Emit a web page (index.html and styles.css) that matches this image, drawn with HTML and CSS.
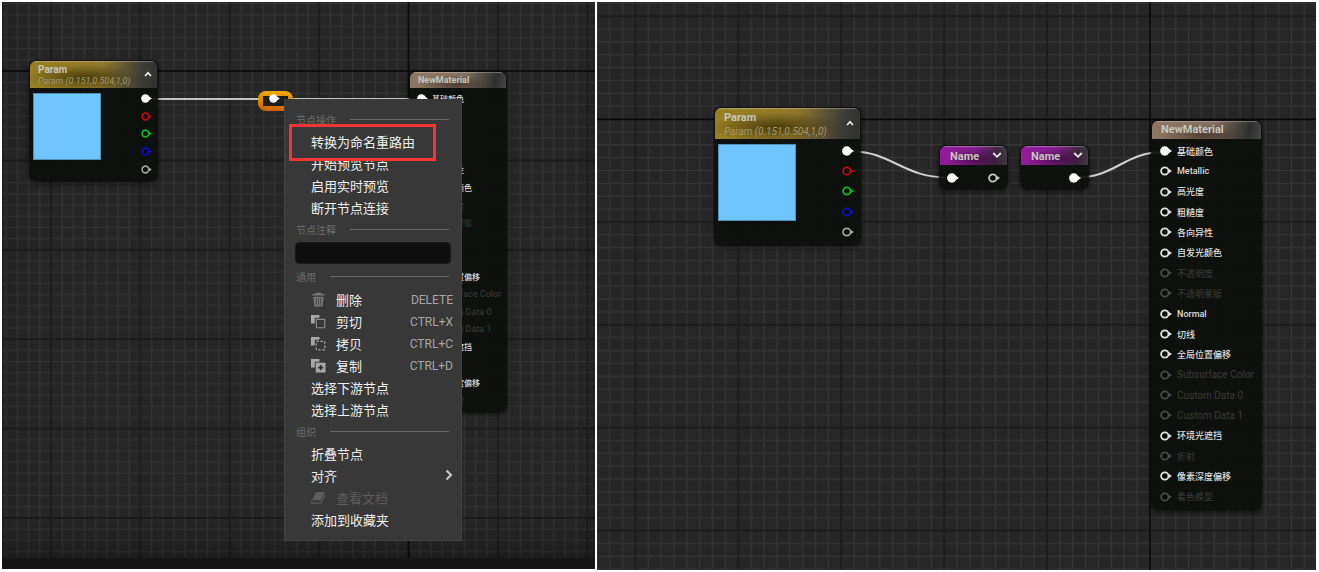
FILE: index.html
```html
<!DOCTYPE html>
<html lang="zh-CN">
<head>
<meta charset="utf-8">
<title>材质编辑器</title>
<link rel="stylesheet" href="styles.css">
</head>
<body>
<svg class="defs" aria-hidden="true">
  <symbol id="pin" viewBox="0 0 12 10"><circle cx="4.8" cy="5" r="3.7" fill="#0b0d0b" stroke="currentColor" stroke-width="1.8"/><path d="M8.6 2.8 12 5 8.6 7.2Z" fill="currentColor"/></symbol>
  <symbol id="pin-on" viewBox="0 0 12 10"><circle cx="4.8" cy="5" r="4.7" fill="currentColor"/><path d="M8.6 2.8 12 5 8.6 7.2Z" fill="currentColor"/></symbol>
  <symbol id="up" viewBox="0 0 8 8"><path d="M1 6 4 2.8 7 6" fill="none" stroke="currentColor" stroke-width="1.7"/></symbol>
  <symbol id="down" viewBox="0 0 10 8"><path d="M1.2 2 5 5.8 8.8 2" fill="none" stroke="currentColor" stroke-width="1.8"/></symbol>
</svg>
<main class="shots">
  <section class="canvas canvas-small">
    <svg class="layer" aria-hidden="true">
      <defs>
        <pattern id="grid-a" width="80" height="80" patternUnits="userSpaceOnUse" patternTransform="translate(49 69) scale(1.1175)">
          <path d="M10 0V80M20 0V80M30 0V80M40 0V80M50 0V80M60 0V80M70 0V80M0 10H80M0 20H80M0 30H80M0 40H80M0 50H80M0 60H80M0 70H80" stroke="#343434" stroke-width="1.1"/>
          <path d="M0 0V80M80 0V80M0 0H80M0 80H80" stroke="#181818" stroke-width="1.2"/>
        </pattern>
      </defs>
      <rect width="100%" height="100%" fill="url(#grid-a)"/>
      <path d="M0 69H2000M406.500 0V2000" stroke="#0b0b0b" stroke-width="1.500"/>
    </svg>
    <div class="vignette"></div>
    <svg class="layer" aria-hidden="true">
      <path d="M150 97 L420 97" stroke="#c4c4c4" stroke-width="2" fill="none"/>
    </svg>

    <article class="node param param-a">
      <header class="gold"><h2>Param</h2><p>Param (0.151,0.504,1,0)</p><svg class="caret"><use href="#up"/></svg></header>
      <div class="body">
        <div class="swatch"></div>
        <ul class="outs">
          <li class="white"><svg class="pin"><use href="#pin-on"/></svg></li>
          <li class="red"><svg class="pin"><use href="#pin"/></svg></li>
          <li class="green"><svg class="pin"><use href="#pin"/></svg></li>
          <li class="blue"><svg class="pin"><use href="#pin"/></svg></li>
          <li class="gray"><svg class="pin"><use href="#pin"/></svg></li>
        </ul>
      </div>
    </article>

    <div class="reroute"><svg class="pin"><use href="#pin-on"/></svg></div>

    <article class="node material material-a">
      <header class="tan"><h2>NewMaterial</h2></header>
      <ul class="ins">
        <li><svg class="pin"><use href="#pin-on"/></svg>基础颜色</li>
        <li><svg class="pin"><use href="#pin"/></svg>Metallic</li>
        <li><svg class="pin"><use href="#pin"/></svg>高光度</li>
        <li><svg class="pin"><use href="#pin"/></svg>粗糙度</li>
        <li><svg class="pin"><use href="#pin"/></svg>各向异性</li>
        <li><svg class="pin"><use href="#pin"/></svg>自发光颜色</li>
        <li class="off"><svg class="pin"><use href="#pin"/></svg>不透明度</li>
        <li class="off"><svg class="pin"><use href="#pin"/></svg>不透明蒙版</li>
        <li><svg class="pin"><use href="#pin"/></svg>Normal</li>
        <li><svg class="pin"><use href="#pin"/></svg>切线</li>
        <li><svg class="pin"><use href="#pin"/></svg>全局位置偏移</li>
        <li class="off latin"><svg class="pin"><use href="#pin"/></svg>Subsurface Color</li>
        <li class="off latin"><svg class="pin"><use href="#pin"/></svg>Custom Data 0</li>
        <li class="off latin"><svg class="pin"><use href="#pin"/></svg>Custom Data 1</li>
        <li><svg class="pin"><use href="#pin"/></svg>环境光遮挡</li>
        <li class="off"><svg class="pin"><use href="#pin"/></svg>折射</li>
        <li><svg class="pin"><use href="#pin"/></svg>像素深度偏移</li>
        <li class="off"><svg class="pin"><use href="#pin"/></svg>着色模型</li>
      </ul>
    </article>

    <nav class="menu">
      <h3 class="wide">节点操作</h3>
      <button class="marked" type="button">转换为命名重路由</button>
      <button type="button">开始预览节点</button>
      <button type="button">启用实时预览</button>
      <button type="button">断开节点连接</button>
      <h3 class="wide"><label for="comment">节点注释</label></h3>
      <input id="comment" type="text">
      <h3 class="tall">通用</h3>
      <button type="button"><svg class="icon" viewBox="0 0 16 16"><path d="M1.500 3h13M5.500 2.500v-1h5v1" stroke="currentColor" stroke-width="1.500" fill="none"/><path d="M2.500 5h11l-1 10.500h-9z" fill="currentColor"/><path d="M5.700 6.500v7.500M8 6.500v7.500M10.300 6.500v7.500" stroke="#444" stroke-width="1"/></svg>删除<kbd>DELETE</kbd></button>
      <button type="button"><svg class="icon bright" viewBox="0 0 16 16"><path d="M0 1h9v3H4v6H0z" fill="currentColor"/><path d="M5.700 5.700h9v9h-9z" fill="none" stroke="#8c8c8c" stroke-width="1.200"/></svg>剪切<kbd>CTRL+X</kbd></button>
      <button type="button"><svg class="icon bright" viewBox="0 0 16 16"><path d="M0 1h9v3H4v6H0z" fill="currentColor"/><path d="M5.700 5.700h9v9h-9z" fill="none" stroke="currentColor" stroke-width="1.300" stroke-dasharray="2.500 2"/></svg>拷贝<kbd>CTRL+C</kbd></button>
      <button type="button"><svg class="icon bright" viewBox="0 0 16 16"><path d="M0 1h9v3H4v6H0z" fill="currentColor"/><path d="M5 5h10.500v10.500H5z" fill="currentColor"/><path d="M10.300 7.500v5.600M7.500 10.300h5.600" stroke="#2b2b2b" stroke-width="1.700"/></svg>复制<kbd>CTRL+D</kbd></button>
      <button type="button">选择下游节点</button>
      <button type="button">选择上游节点</button>
      <h3>组织</h3>
      <button type="button">折叠节点</button>
      <button type="button">对齐<svg class="more" viewBox="0 0 8 12"><path d="M1.500 1.500 6 6 1.500 10.500" fill="none" stroke="currentColor" stroke-width="2"/></svg></button>
      <button type="button" disabled><svg class="icon" viewBox="0 0 16 16"><path d="M5.500 2h9.500L10.500 11H1z" fill="currentColor"/><path d="M1 11.500 .8 14h9.700L15 5.200" fill="none" stroke="currentColor" stroke-width="1.200"/></svg>查看文档</button>
      <button type="button">添加到收藏夹</button>
    </nav>
    <footer class="strip"></footer>
  </section>

  <section class="canvas canvas-large">
    <svg class="layer" aria-hidden="true">
      <defs>
        <pattern id="grid-b" width="80" height="80" patternUnits="userSpaceOnUse" patternTransform="translate(38.500 117) scale(1.286)">
          <path d="M10 0V80M20 0V80M30 0V80M40 0V80M50 0V80M60 0V80M70 0V80M0 10H80M0 20H80M0 30H80M0 40H80M0 50H80M0 60H80M0 70H80" stroke="#343434" stroke-width="1.1"/>
          <path d="M0 0V80M80 0V80M0 0H80M0 80H80" stroke="#191919" stroke-width="1.1"/>
        </pattern>
      </defs>
      <rect width="100%" height="100%" fill="url(#grid-b)"/>
      <path d="M0 117.500H2000M553 0V2000" stroke="#080808" stroke-width="1.300"/>
      <path d="M256 149.500C293 149.500 307 175.500 350 175.500M480 175.500C518 175.500 528 150 566 150" stroke="#d0d0d0" stroke-width="2" fill="none"/>
    </svg>

    <article class="node param param-b">
      <header class="gold"><h2>Param</h2><p>Param (0.151,0.504,1,0)</p><svg class="caret"><use href="#up"/></svg></header>
      <div class="body">
        <div class="swatch"></div>
        <ul class="outs">
          <li class="white"><svg class="pin"><use href="#pin-on"/></svg></li>
          <li class="red"><svg class="pin"><use href="#pin"/></svg></li>
          <li class="green"><svg class="pin"><use href="#pin"/></svg></li>
          <li class="blue"><svg class="pin"><use href="#pin"/></svg></li>
          <li class="gray"><svg class="pin"><use href="#pin"/></svg></li>
        </ul>
      </div>
    </article>

    <article class="node name name-in">
      <header class="purple"><h2>Name</h2><svg class="caret"><use href="#down"/></svg></header>
      <div class="ports"><svg class="pin"><use href="#pin-on"/></svg><svg class="pin hollow"><use href="#pin"/></svg></div>
    </article>
    <article class="node name name-out">
      <header class="purple"><h2>Name</h2><svg class="caret"><use href="#down"/></svg></header>
      <div class="ports end"><svg class="pin"><use href="#pin-on"/></svg></div>
    </article>

    <article class="node material material-b">
      <header class="tan"><h2>NewMaterial</h2></header>
      <ul class="ins">
        <li><svg class="pin"><use href="#pin-on"/></svg>基础颜色</li>
        <li><svg class="pin"><use href="#pin"/></svg>Metallic</li>
        <li><svg class="pin"><use href="#pin"/></svg>高光度</li>
        <li><svg class="pin"><use href="#pin"/></svg>粗糙度</li>
        <li><svg class="pin"><use href="#pin"/></svg>各向异性</li>
        <li><svg class="pin"><use href="#pin"/></svg>自发光颜色</li>
        <li class="off"><svg class="pin"><use href="#pin"/></svg>不透明度</li>
        <li class="off"><svg class="pin"><use href="#pin"/></svg>不透明蒙版</li>
        <li><svg class="pin"><use href="#pin"/></svg>Normal</li>
        <li><svg class="pin"><use href="#pin"/></svg>切线</li>
        <li><svg class="pin"><use href="#pin"/></svg>全局位置偏移</li>
        <li class="off latin"><svg class="pin"><use href="#pin"/></svg>Subsurface Color</li>
        <li class="off latin"><svg class="pin"><use href="#pin"/></svg>Custom Data 0</li>
        <li class="off latin"><svg class="pin"><use href="#pin"/></svg>Custom Data 1</li>
        <li><svg class="pin"><use href="#pin"/></svg>环境光遮挡</li>
        <li class="off"><svg class="pin"><use href="#pin"/></svg>折射</li>
        <li><svg class="pin"><use href="#pin"/></svg>像素深度偏移</li>
        <li class="off"><svg class="pin"><use href="#pin"/></svg>着色模型</li>
      </ul>
    </article>
  </section>
</main>
</body>
</html>
```

FILE: styles.css
```css
* { box-sizing: border-box; }
body { margin: 0; background: #fff; font-family: Roboto, "Noto Sans CJK SC", sans-serif; }
h2, h3, p, ul { margin: 0; padding: 0; list-style: none; }
.defs { position: absolute; width: 0; height: 0; }

.shots { display: flex; gap: 2px; height: 100vh; padding: 2px 3px 2px 2px; }
.canvas { position: relative; overflow: hidden; background: #262626; }
.canvas-small { flex: 593; margin-bottom: 1px; }
.canvas-large { flex: 719; }
.layer { position: absolute; inset: 0; width: 100%; height: 100%; }
.vignette { position: absolute; inset: 0; box-shadow: inset 0 -30px 40px -16px rgba(0, 0, 0, .45); }
.strip { position: absolute; left: 0; right: 0; bottom: 0; height: 11px; background: #161616; }

/* Nodes */
.node { position: absolute; display: flex; flex-direction: column; overflow: hidden; border-radius: 6px; background: rgba(12, 15, 12, .93); box-shadow: 0 0 2px 1px #0c0c0c, 0 3px 6px rgba(0, 0, 0, .6); }
.node header { position: relative; color: #c6c6be; box-shadow: inset 0 1px 1px rgba(255, 255, 255, .3); }
.node h2 { font-weight: 700; }
.node p { font-style: italic; color: #a5986a; white-space: nowrap; }
.gold { background: radial-gradient(ellipse at 42% 62%, rgba(50, 38, 0, .75), rgba(50, 38, 0, 0) 55%), linear-gradient(100deg, #98801f 0%, #8f782c 55%, #3a3a36 88%, #303230 100%); }
.tan { background: radial-gradient(ellipse at 48% 80%, rgba(66, 52, 42, .8), rgba(60, 50, 40, 0) 55%), linear-gradient(100deg, #8e7660 0%, #83705f 55%, #2e302e 88%, #444 100%); }
.purple { background: radial-gradient(ellipse at 55% 70%, rgba(60, 8, 66, .8), rgba(60, 8, 66, 0) 60%), linear-gradient(100deg, #931a9c 0%, #86208e 50%, #3c2a3e 82%, #3c3c3c 100%); }
.caret { position: absolute; color: #e6e6e6; width: 8px; height: 8px; }
.pin { flex: none; width: 12px; height: 10px; color: #fff; }
.canvas-small .pin { width: 11px; height: 9px; }

.body { display: flex; flex: 1; justify-content: space-between; }
.swatch { background: #6ec5ff; border: 1px solid #4f8fba; }
.outs, .ins { display: grid; grid-auto-rows: 1fr; }
.outs li, .ins li { display: flex; align-items: center; }
.red .pin { color: #c60808; }
.green .pin { color: #08bd14; }
.blue .pin { color: #0c0cc4; }
.gray .pin { color: #a0a0a0; }

.param-a { left: 28px; top: 59px; width: 127px; height: 119px; }
.param-a header { height: 27px; padding: 3px 8px; }
.param-a h2 { font-size: 10px; line-height: 11px; }
.param-a p { font-size: 9px; line-height: 12px; }
.param-a .caret { right: 5px; top: 9px; }
.param-a .body { padding: 2px 5px 2px 3px; }
.param-a .swatch { width: 68px; height: 67px; margin-top: 3px; }

.param-b { left: 118px; top: 106px; width: 145px; height: 136px; }
.param-b header { height: 31px; padding: 3px 9px; }
.param-b h2 { font-size: 11px; line-height: 14px; }
.param-b p { font-size: 10px; line-height: 13px; }
.param-b .caret { right: 6px; top: 11px; }
.param-b .body { padding: 2px 6px 2px 3px; }
.param-b .swatch { width: 78px; height: 77px; margin-top: 3px; }

.reroute { position: absolute; left: 256px; top: 89px; width: 35px; height: 20px; padding: 3px 11px; border-radius: 8px; background: linear-gradient(#1d1d1d, #1d1d1d) 5px 5px / 25px 10px no-repeat, linear-gradient(#f0aa00, #cc6200); }
.reroute .pin { display: block; }

.name { top: 144px; width: 67px; height: 42px; }
.name-in { left: 343px; }
.name-out { left: 424px; }
.name header { height: 19px; padding: 3px 10px; }
.name h2 { font-size: 11px; line-height: 15px; }
.name .caret { right: 5px; top: 5px; width: 10px; }
.ports { display: flex; flex: 1; align-items: center; justify-content: space-between; padding: 2px 7px 0; }
.ports.end { justify-content: flex-end; }
.hollow { color: #c8c8c8; }

.material .pin { color: #e2e2e2; }
.material li:first-child .pin { color: #fff; }
.ins { flex: 1; color: #dedede; font-weight: 500; white-space: nowrap; }
.ins .off { color: #3a3b3a; font-weight: 400; }
.material .off .pin { color: #484948; }
.material-a { left: 408px; top: 70px; width: 96px; height: 339px; }
.material-a header { height: 16px; padding: 0 8px; }
.material-a h2 { font-size: 9px; line-height: 17px; }
.material-a .ins { padding: 2px 7px; font-size: 8px; }
.material-a li { gap: 4px; }
.material-a .latin { font-size: 9px; }
.material-b { left: 555px; top: 119px; width: 109px; height: 388px; }
.material-b header { height: 18px; padding: 0 9px; }
.material-b h2 { font-size: 11px; line-height: 18px; }
.material-b .ins { padding: 2px 8px; font-size: 9px; }
.material-b li { gap: 5px; }
.material-b .latin { font-size: 10px; }

/* Context menu */
.menu { position: absolute; left: 282px; top: 97px; width: 178px; display: flex; flex-direction: column; padding: 10px 11px 9px; background: #383838; border: 1px solid #444; border-top: 0; }
.menu h3 { display: flex; align-items: center; gap: 14px; height: 22px; padding-bottom: 1px; color: #6c6c6c; font-size: 10px; font-weight: 400; }
.menu h3::after { content: ""; flex: 1; height: 1px; margin-right: 1px; background: #686868; }
.menu .tall { height: 25px; }
.menu button { position: relative; display: flex; align-items: center; height: 22px; padding: 0 0 2px 15px; border: 0; background: none; color: #eee; font: 400 13px Roboto, "Noto Sans CJK SC", sans-serif; text-align: left; }
.menu button:disabled { color: #5c5c5c; }
.menu .marked::after { content: ""; position: absolute; z-index: 1; inset: -7px 14px -8px -7px; border: 3px solid #f53535; }
.menu input { height: 22px; margin: 1px -1px 0; padding: 0 6px; border: 1px solid #1c1c1c; border-radius: 4px; background: #0f0f0f; color: #ddd; font: 12px Roboto, "Noto Sans CJK SC", sans-serif; }
.icon { width: 15px; height: 15px; margin-right: 10px; color: #777; }
.icon.bright { color: #a8a8a8; }
button:disabled .icon { color: #5c5c5c; }
.menu kbd { margin-left: auto; margin-right: -3px; padding-top: 2px; color: #a6a6a6; font: 12px Roboto, sans-serif; }
.more { width: 8px; height: 12px; margin-left: auto; margin-right: -3px; color: #ccc; }
```
